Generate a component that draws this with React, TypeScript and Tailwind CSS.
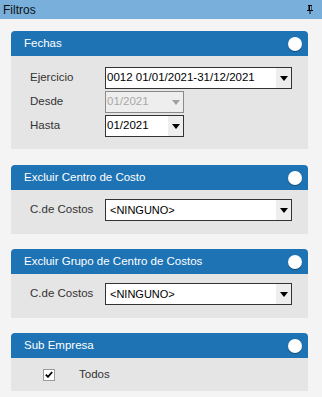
const font = { fontFamily: '"Liberation Sans", Arial, sans-serif' };

function Arrow({ disabled }: { disabled?: boolean }) {
  return (
    <div className="w-[15px] h-full bg-[#eeeeee] flex items-center justify-center">
      <svg width="8" height="5" viewBox="0 0 8 5">
        <path d="M0 0 L8 0 L4 5 Z" fill={disabled ? '#a0a0a0' : '#000000'} />
      </svg>
    </div>
  );
}

function Select({
  value,
  width,
  disabled,
  inset,
}: {
  value: string;
  width: string;
  disabled?: boolean;
  inset?: boolean;
}) {
  return (
    <div
      className={`${width} h-[22px] flex items-stretch border ${
        disabled ? 'border-[#8a8a8a] bg-[#eeeeee] text-[#a8a8a8]' : 'border-[#333333] bg-white text-black'
      }`}
    >
      <div
        className={`flex-1 flex items-center ${
          inset ? 'pl-[4px] text-[11px]' : 'pl-[1px] text-[11.5px]'
        } leading-none whitespace-nowrap overflow-hidden`}
      >
        {value}
      </div>
      <Arrow disabled={disabled} />
    </div>
  );
}

function Panel({ title, className, children }: { title: string; className?: string; children: React.ReactNode }) {
  return (
    <div className={`w-[297px] ${className ?? ''}`}>
      <div className="h-[25px] bg-[#1e73b5] rounded-t-[4px] flex items-center justify-between pl-[13px] pr-[6px]">
        <span className="text-white text-[11.5px]">{title}</span>
        <div className="w-[14px] h-[14px] rounded-full bg-white shadow-[0_1px_1px_rgba(0,0,0,0.35)]" />
      </div>
      <div className="bg-[#e5e5e5]">{children}</div>
    </div>
  );
}

function Row({ label, children }: { label: string; children: React.ReactNode }) {
  return (
    <div className="flex items-center h-[22px]">
      <span className="w-[75px] text-[11.5px] text-[#333333]">{label}</span>
      {children}
    </div>
  );
}

export default function App() {
  return (
    <div className="w-[322px] h-[397px] bg-[#f4f4f4] overflow-hidden" style={font}>
      <div className="h-[19px] bg-[#78afdb] flex items-center justify-between pl-[3px] pr-[9px]">
        <span className="text-[12px] text-[#111111]">Filtros</span>
        <svg width="6" height="9" viewBox="0 0 6 9">
          <path d="M1 0 H5 V1 H4.5 V5 H6 V6 H3.5 V9 H2.5 V6 H0 V5 H1.5 V1 H1 Z" fill="#000000" />
          <rect x="3" y="1" width="1" height="4" fill="#78afdb" />
        </svg>
      </div>

      <div className="pl-[11px] pt-[12px]">
        <Panel title="Fechas">
          <div className="pl-[19px] pt-[11px] pb-[12px] flex flex-col gap-[2px]">
            <Row label="Ejercicio">
              <Select value="0012 01/01/2021-31/12/2021" width="w-[187px]" />
            </Row>
            <Row label="Desde">
              <Select value="01/2021" width="w-[79px]" disabled />
            </Row>
            <Row label="Hasta">
              <Select value="01/2021" width="w-[79px]" />
            </Row>
          </div>
        </Panel>

        <Panel title="Excluir Centro de Costo" className="mt-[16px]">
          <div className="pl-[19px] pt-[9px] pb-[13px]">
            <Row label="C.de Costos">
              <Select value="<NINGUNO>" width="w-[187px]" inset />
            </Row>
          </div>
        </Panel>

        <Panel title="Excluir Grupo de Centro de Costos" className="mt-[15px]">
          <div className="pl-[19px] pt-[9px] pb-[13px]">
            <Row label="C.de Costos">
              <Select value="<NINGUNO>" width="w-[187px]" inset />
            </Row>
          </div>
        </Panel>

        <Panel title="Sub Empresa" className="mt-[15px]">
          <div className="h-[33px] flex items-center pl-[32px]">
            <div className="w-[12px] h-[12px] bg-white border border-[#9a9a9a] flex items-center justify-center">
              <svg width="8" height="7" viewBox="0 0 8 7">
                <path d="M0.8 3.6 L3 5.8 L7.2 1" stroke="#000000" strokeWidth="1.8" fill="none" />
              </svg>
            </div>
            <span className="ml-[24px] text-[11.5px] text-[#333333]">Todos</span>
          </div>
        </Panel>
      </div>
    </div>
  );
}
